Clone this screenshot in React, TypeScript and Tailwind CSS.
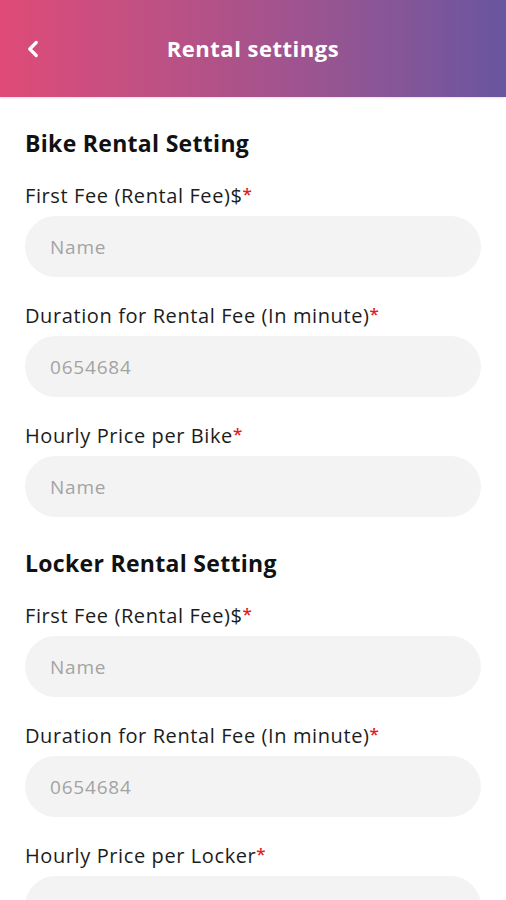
import { FiChevronLeft } from 'react-icons/fi'

type Field = {
  label: string
  placeholder: string
}

type Section = {
  title: string
  fields: Field[]
}

const sections: Section[] = [
  {
    title: 'Bike Rental Setting',
    fields: [
      { label: 'First Fee (Rental Fee)$', placeholder: 'Name' },
      { label: 'Duration for Rental Fee (In minute)', placeholder: '0654684' },
      { label: 'Hourly Price per Bike', placeholder: 'Name' },
    ],
  },
  {
    title: 'Locker Rental Setting',
    fields: [
      { label: 'First Fee (Rental Fee)$', placeholder: 'Name' },
      { label: 'Duration for Rental Fee (In minute)', placeholder: '0654684' },
      { label: 'Hourly Price per Locker', placeholder: 'Name' },
    ],
  },
]

function FormField({ label, placeholder }: Field) {
  return (
    <div className="flex flex-col">
      <label className="text-[20px] leading-6 tracking-[0.6px] text-[#1c1c1c]">
        {label}
        <span className="align-top text-[17px] leading-5 font-semibold text-[#e11d1d]">*</span>
      </label>
      <input
        type="text"
        placeholder={placeholder}
        className="mt-2 h-[61px] w-full rounded-full bg-[#f3f3f3] px-[25px] text-[19px] tracking-[0.8px] text-[#222] outline-none placeholder:text-[#a3a3a3]"
      />
    </div>
  )
}

export default function App() {
  return (
    <div className="h-[900px] overflow-hidden bg-white font-['Open_Sans','Noto_Sans',sans-serif]">
      <header className="relative flex h-[97px] items-center justify-center bg-gradient-to-r from-[#df4a77] via-[#a9528b] to-[#6955a0] shadow-[0_1px_2px_rgba(0,0,0,0.12)]">
        <button
          type="button"
          className="absolute left-[17px] top-1/2 flex h-8 w-8 -translate-y-1/2 items-center justify-center text-white"
          aria-label="Back"
        >
          <FiChevronLeft className="h-[26px] w-[26px]" strokeWidth={3} />
        </button>
        <h1 className="text-[22px] font-bold tracking-[0.5px] text-white">Rental settings</h1>
      </header>

      <main className="flex flex-col gap-[32px] px-[25px] pt-[32px]">
        {sections.map((section) => (
          <section key={section.title} className="flex flex-col gap-[27px]">
            <h2 className="text-[23px] font-bold leading-7 tracking-[0.3px] text-[#111]">{section.title}</h2>
            {section.fields.map((field, index) => (
              <FormField key={index} label={field.label} placeholder={field.placeholder} />
            ))}
          </section>
        ))}
      </main>
    </div>
  )
}
